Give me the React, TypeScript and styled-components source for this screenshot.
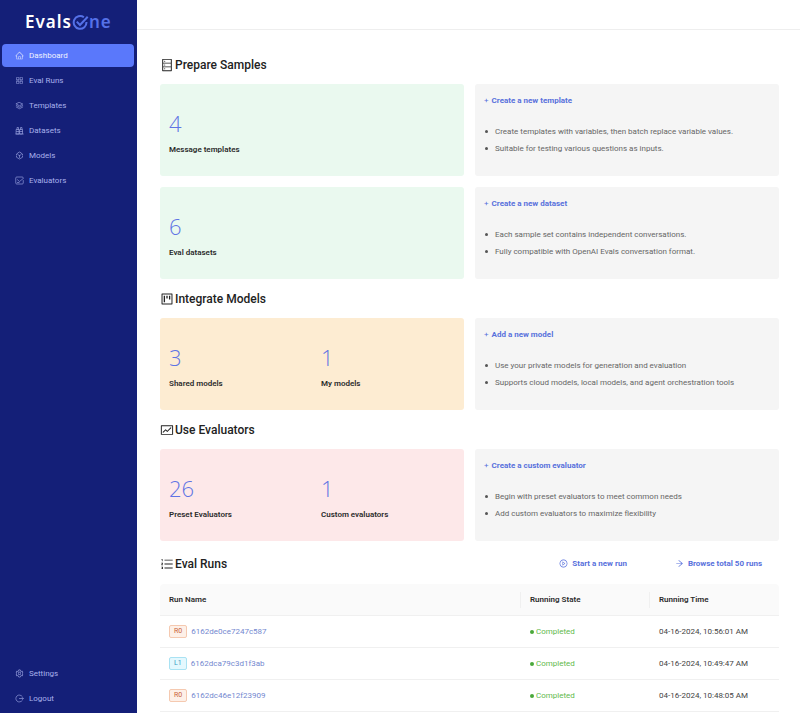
import React from "react";
import styled, { createGlobalStyle, css } from "styled-components";
import {
  AiOutlineHome,
  AiOutlineAppstore,
  AiOutlineSetting,
  AiOutlineDatabase,
  AiOutlineProject,
  AiOutlineFund,
  AiOutlineOrderedList,
  AiOutlinePlayCircle,
  AiOutlineArrowRight,
} from "react-icons/ai";

const GlobalStyle = createGlobalStyle`
  * { box-sizing: border-box; }
  body {
    margin: 0;
    background: #fff;
    color: #2b2b2b;
    font-family: Roboto, "Open Sans", sans-serif;
    font-size: 8px;
    line-height: 12px;
  }
  a { text-decoration: none; color: inherit; }
`;

const Layout = styled.div`
  display: grid;
  grid-template-columns: 137px minmax(0, 1fr);
  min-height: 100vh;
`;

const Sidebar = styled.aside`
  position: sticky;
  top: 0;
  height: 100vh;
  display: flex;
  flex-direction: column;
  justify-content: space-between;
  padding: 0 3px 3px 2px;
  background: #141f78;
`;

const Logo = styled.a`
  display: flex;
  align-items: center;
  height: 44px;
  padding-left: 23px;
  font: 600 17px/20px "Noto Sans", "Open Sans", sans-serif;
  letter-spacing: 1px;
  color: #fff;
`;

const LogoAccent = styled.span`
  display: inline-flex;
  align-items: center;
  color: #5571e8;
`;

const NavList = styled.nav`
  display: flex;
  flex-direction: column;
  gap: 2px;
`;

const NavItem = styled.a<{ $active?: boolean }>`
  display: flex;
  align-items: center;
  gap: 5px;
  height: 23px;
  padding-left: 13px;
  border-radius: 4px;
  color: #a9b1ec;
  ${(p) =>
    p.$active &&
    css`
      background: #5a78fb;
      color: #f0f3ff;
    `}
  svg {
    width: 9px;
    height: 9px;
    opacity: 0.85;
  }
`;

const TopBar = styled.header`
  height: 30px;
  border-bottom: 1px solid #eeeeee;
`;

const Content = styled.main`
  padding: 15px 21px 0 23px;
`;

const HeadingRow = styled.div<{ $tall?: boolean }>`
  display: flex;
  align-items: center;
  justify-content: space-between;
  height: ${(p) => (p.$tall ? 43 : 39)}px;
  padding-top: ${(p) => (p.$tall ? 2 : 1)}px;
`;

const Heading = styled.h2`
  display: flex;
  align-items: center;
  gap: 1px;
  margin: 0;
  font-size: 12px;
  line-height: 18px;
  font-weight: 500;
  color: #222;
  svg {
    width: 14px;
    height: 14px;
  }
`;

const CardRows = styled.div`
  display: grid;
  gap: 11px;
`;

const CardRow = styled.div`
  display: grid;
  grid-template-columns: 1fr 1fr;
  gap: 11px;
`;

const StatCard = styled.div<{ $bg: string }>`
  display: grid;
  grid-template-columns: 1fr 1fr;
  min-height: 92px;
  border-radius: 3px;
  background: ${(p) => p.$bg};
`;

const Stat = styled.div`
  padding: 24px 9px 0;
`;

const StatValue = styled.div`
  font-family: "Open Sans", "Noto Sans", sans-serif;
  font-size: 22px;
  line-height: 30px;
  font-weight: 300;
  color: #5f74e4;
`;

const StatLabel = styled.div`
  margin-top: 6px;
  font-weight: 600;
`;

const HintCard = styled.div`
  padding: 11px 9px;
  border-radius: 3px;
  background: #f5f5f5;
`;

const ActionLink = styled.a<{ $wide?: boolean }>`
  display: inline-flex;
  align-items: center;
  gap: ${(p) => (p.$wide ? 4 : 3)}px;
  font-weight: 700;
  color: #5871dc;
`;

const Plus = styled.span`
  font-weight: 400;
`;

const HintList = styled.ul`
  display: grid;
  margin: 16px 0 0;
  padding: 0;
  list-style: none;
  line-height: 17px;
  color: #666;
`;

const Hint = styled.li`
  display: flex;
  align-items: center;
  gap: 7px;
  padding-left: 1px;
  &::before {
    content: "";
    width: 3px;
    height: 3px;
    border-radius: 50%;
    background: #555;
  }
`;

const Actions = styled.div`
  display: flex;
  gap: 48px;
  padding-right: 17px;
`;

const RunTable = styled.table`
  width: 100%;
  table-layout: fixed;
  border-collapse: separate;
  border-spacing: 0;
`;

const HeadCell = styled.th<{ $width?: string }>`
  width: ${(p) => p.$width ?? "auto"};
  height: 32px;
  padding: 0 9px;
  text-align: left;
  font-weight: 600;
  background: linear-gradient(#f0f0f0, #f0f0f0) right center / 1px 16px no-repeat #fafafa;
  border-bottom: 1px solid #f0f0f0;
  &:first-child { border-top-left-radius: 4px; }
  &:last-child {
    border-top-right-radius: 4px;
    background: #fafafa;
  }
`;

const Cell = styled.td`
  height: 32px;
  padding: 0 9px;
  border-bottom: 1px solid #f0f0f0;
  color: #444;
`;

const RunCell = styled.div`
  display: flex;
  align-items: center;
  gap: 4px;
`;

const Tag = styled.span<{ $kind: "orange" | "cyan" }>`
  padding: 0 4px;
  border: 1px solid ${(p) => (p.$kind === "orange" ? "#f5c9b0" : "#a9e2f3")};
  border-radius: 2px;
  background: ${(p) => (p.$kind === "orange" ? "#fdf0e8" : "#e4f8fe")};
  color: ${(p) => (p.$kind === "orange" ? "#c9623c" : "#3a9cc4")};
  font-size: 7px;
  line-height: 11px;
`;

const RunLink = styled.a`
  color: #7388cf;
`;

const Status = styled.div`
  display: flex;
  align-items: center;
  gap: 2px;
  color: #5fba4c;
  &::before {
    content: "";
    width: 4px;
    height: 4px;
    border-radius: 50%;
    background: #4aa83a;
  }
`;

const Glyph = ({ children }: { children: React.ReactNode }) => (
  <svg viewBox="0 0 18 18" fill="none" stroke="currentColor" strokeWidth="1.4" strokeLinejoin="round" strokeLinecap="round" aria-hidden="true">
    {children}
  </svg>
);

const LayersGlyph = () => (
  <Glyph>
    <path d="M9 3 15.500 6 9 9.500 2.500 6ZM2.500 9 9 12.500 15.500 9M2.500 12 9 15.500 15.500 12" />
  </Glyph>
);

const DatasetGlyph = () => (
  <Glyph>
    <path d="M3 7h5v9H3ZM10 7h5v9h-5ZM4 7V3h3v4M11 7V3h3v4M3 11h12M1.500 16h15" />
  </Glyph>
);

const ModelGlyph = () => (
  <Glyph>
    <path d="M6 3.500 9 2l3 1.500M3 8V6l2.500-1M15 8V6l-2.500-1M3 10.500v2L9 16l6-3.500v-2M6 7.500 9 9l3-1.500M9 9v4" />
  </Glyph>
);

const EvaluatorGlyph = () => (
  <Glyph>
    <path d="M16.500 9v5a2 2 0 0 1-2 2h-11a2 2 0 0 1-2-2V4a2 2 0 0 1 2-2h11a2 2 0 0 1 2 2M5 7.500 9 11l7.500-6M5 13h3" />
  </Glyph>
);

const LogoutGlyph = () => (
  <Glyph>
    <path d="M14.500 5A7 7 0 1 0 14.500 13M9 9h7.500M14.500 7l2 2-2 2" />
  </Glyph>
);

const LogoMark = () => (
  <svg width="17" height="17" viewBox="0 0 16 16" fill="none" stroke="currentColor" strokeWidth="1.9" aria-hidden="true">
    <path d="M11.200 3.100A6 6 0 1 0 13.600 7.500" />
    <path d="M4.500 7.200 7.500 10.400 14.800 2.600" />
  </svg>
);

const navItems = [
  { label: "Dashboard", icon: <AiOutlineHome />, active: true },
  { label: "Eval Runs", icon: <AiOutlineAppstore /> },
  { label: "Templates", icon: <LayersGlyph /> },
  { label: "Datasets", icon: <DatasetGlyph /> },
  { label: "Models", icon: <ModelGlyph /> },
  { label: "Evaluators", icon: <EvaluatorGlyph /> },
];

type CardData = {
  bg: string;
  stats: [string, string][];
  action: string;
  hints: string[];
};

const sections: { title: string; icon: React.ReactNode; cards: CardData[] }[] = [
  {
    title: "Prepare Samples",
    icon: <AiOutlineDatabase />,
    cards: [
      {
        bg: "#eaf9ef",
        stats: [["4", "Message templates"]],
        action: "Create a new template",
        hints: [
          "Create templates with variables, then batch replace variable values.",
          "Suitable for testing various questions as inputs.",
        ],
      },
      {
        bg: "#eaf9ef",
        stats: [["6", "Eval datasets"]],
        action: "Create a new dataset",
        hints: [
          "Each sample set contains independent conversations.",
          "Fully compatible with OpenAI Evals conversation format.",
        ],
      },
    ],
  },
  {
    title: "Integrate Models",
    icon: <AiOutlineProject />,
    cards: [
      {
        bg: "#fdecd2",
        stats: [["3", "Shared models"], ["1", "My models"]],
        action: "Add a new model",
        hints: [
          "Use your private models for generation and evaluation",
          "Supports cloud models, local models, and agent orchestration tools",
        ],
      },
    ],
  },
  {
    title: "Use Evaluators",
    icon: <AiOutlineFund />,
    cards: [
      {
        bg: "#fde8e9",
        stats: [["26", "Preset Evaluators"], ["1", "Custom evaluators"]],
        action: "Create a custom evaluator",
        hints: [
          "Begin with preset evaluators to meet common needs",
          "Add custom evaluators to maximize flexibility",
        ],
      },
    ],
  },
];

const runs: { tag: string; kind: "orange" | "cyan"; id: string; time: string }[] = [
  { tag: "R0", kind: "orange", id: "6162de0ce7247c587", time: "04-16-2024, 10:56:01 AM" },
  { tag: "L1", kind: "cyan", id: "6162dca79c3d1f3ab", time: "04-16-2024, 10:49:47 AM" },
  { tag: "R0", kind: "orange", id: "6162dc46e12f23909", time: "04-16-2024, 10:48:05 AM" },
];

export default function App() {
  return (
    <>
      <GlobalStyle />
      <Layout>
        <Sidebar>
          <div>
            <Logo href="#">
              Evals
              <LogoAccent>
                <LogoMark />
                ne
              </LogoAccent>
            </Logo>
            <NavList aria-label="Main">
              {navItems.map((item) => (
                <NavItem key={item.label} href="#" $active={item.active}>
                  {item.icon}
                  {item.label}
                </NavItem>
              ))}
            </NavList>
          </div>
          <NavList aria-label="Account">
            <NavItem href="#">
              <AiOutlineSetting />
              Settings
            </NavItem>
            <NavItem href="#">
              <LogoutGlyph />
              Logout
            </NavItem>
          </NavList>
        </Sidebar>
        <div>
          <TopBar />
          <Content>
            {sections.map((section) => (
              <section key={section.title}>
                <HeadingRow>
                  <Heading>
                    {section.icon}
                    {section.title}
                  </Heading>
                </HeadingRow>
                <CardRows>
                  {section.cards.map((card) => (
                    <CardRow key={card.action}>
                      <StatCard $bg={card.bg}>
                        {card.stats.map(([value, label]) => (
                          <Stat key={label}>
                            <StatValue>{value}</StatValue>
                            <StatLabel>{label}</StatLabel>
                          </Stat>
                        ))}
                      </StatCard>
                      <HintCard>
                        <ActionLink href="#">
                          <Plus>+</Plus>
                          {card.action}
                        </ActionLink>
                        <HintList>
                          {card.hints.map((hint) => (
                            <Hint key={hint}>{hint}</Hint>
                          ))}
                        </HintList>
                      </HintCard>
                    </CardRow>
                  ))}
                </CardRows>
              </section>
            ))}
            <section>
              <HeadingRow $tall>
                <Heading>
                  <AiOutlineOrderedList />
                  Eval Runs
                </Heading>
                <Actions>
                  <ActionLink href="#" $wide>
                    <AiOutlinePlayCircle size={9} />
                    Start a new run
                  </ActionLink>
                  <ActionLink href="#" $wide>
                    <AiOutlineArrowRight size={9} />
                    Browse total 50 runs
                  </ActionLink>
                </Actions>
              </HeadingRow>
              <RunTable>
                <thead>
                  <tr>
                    <HeadCell>Run Name</HeadCell>
                    <HeadCell $width="129px">Running State</HeadCell>
                    <HeadCell $width="129px">Running Time</HeadCell>
                  </tr>
                </thead>
                <tbody>
                  {runs.map((run) => (
                    <tr key={run.id}>
                      <Cell>
                        <RunCell>
                          <Tag $kind={run.kind}>{run.tag}</Tag>
                          <RunLink href="#">{run.id}</RunLink>
                        </RunCell>
                      </Cell>
                      <Cell>
                        <Status>Completed</Status>
                      </Cell>
                      <Cell>{run.time}</Cell>
                    </tr>
                  ))}
                </tbody>
              </RunTable>
            </section>
          </Content>
        </div>
      </Layout>
    </>
  );
}
